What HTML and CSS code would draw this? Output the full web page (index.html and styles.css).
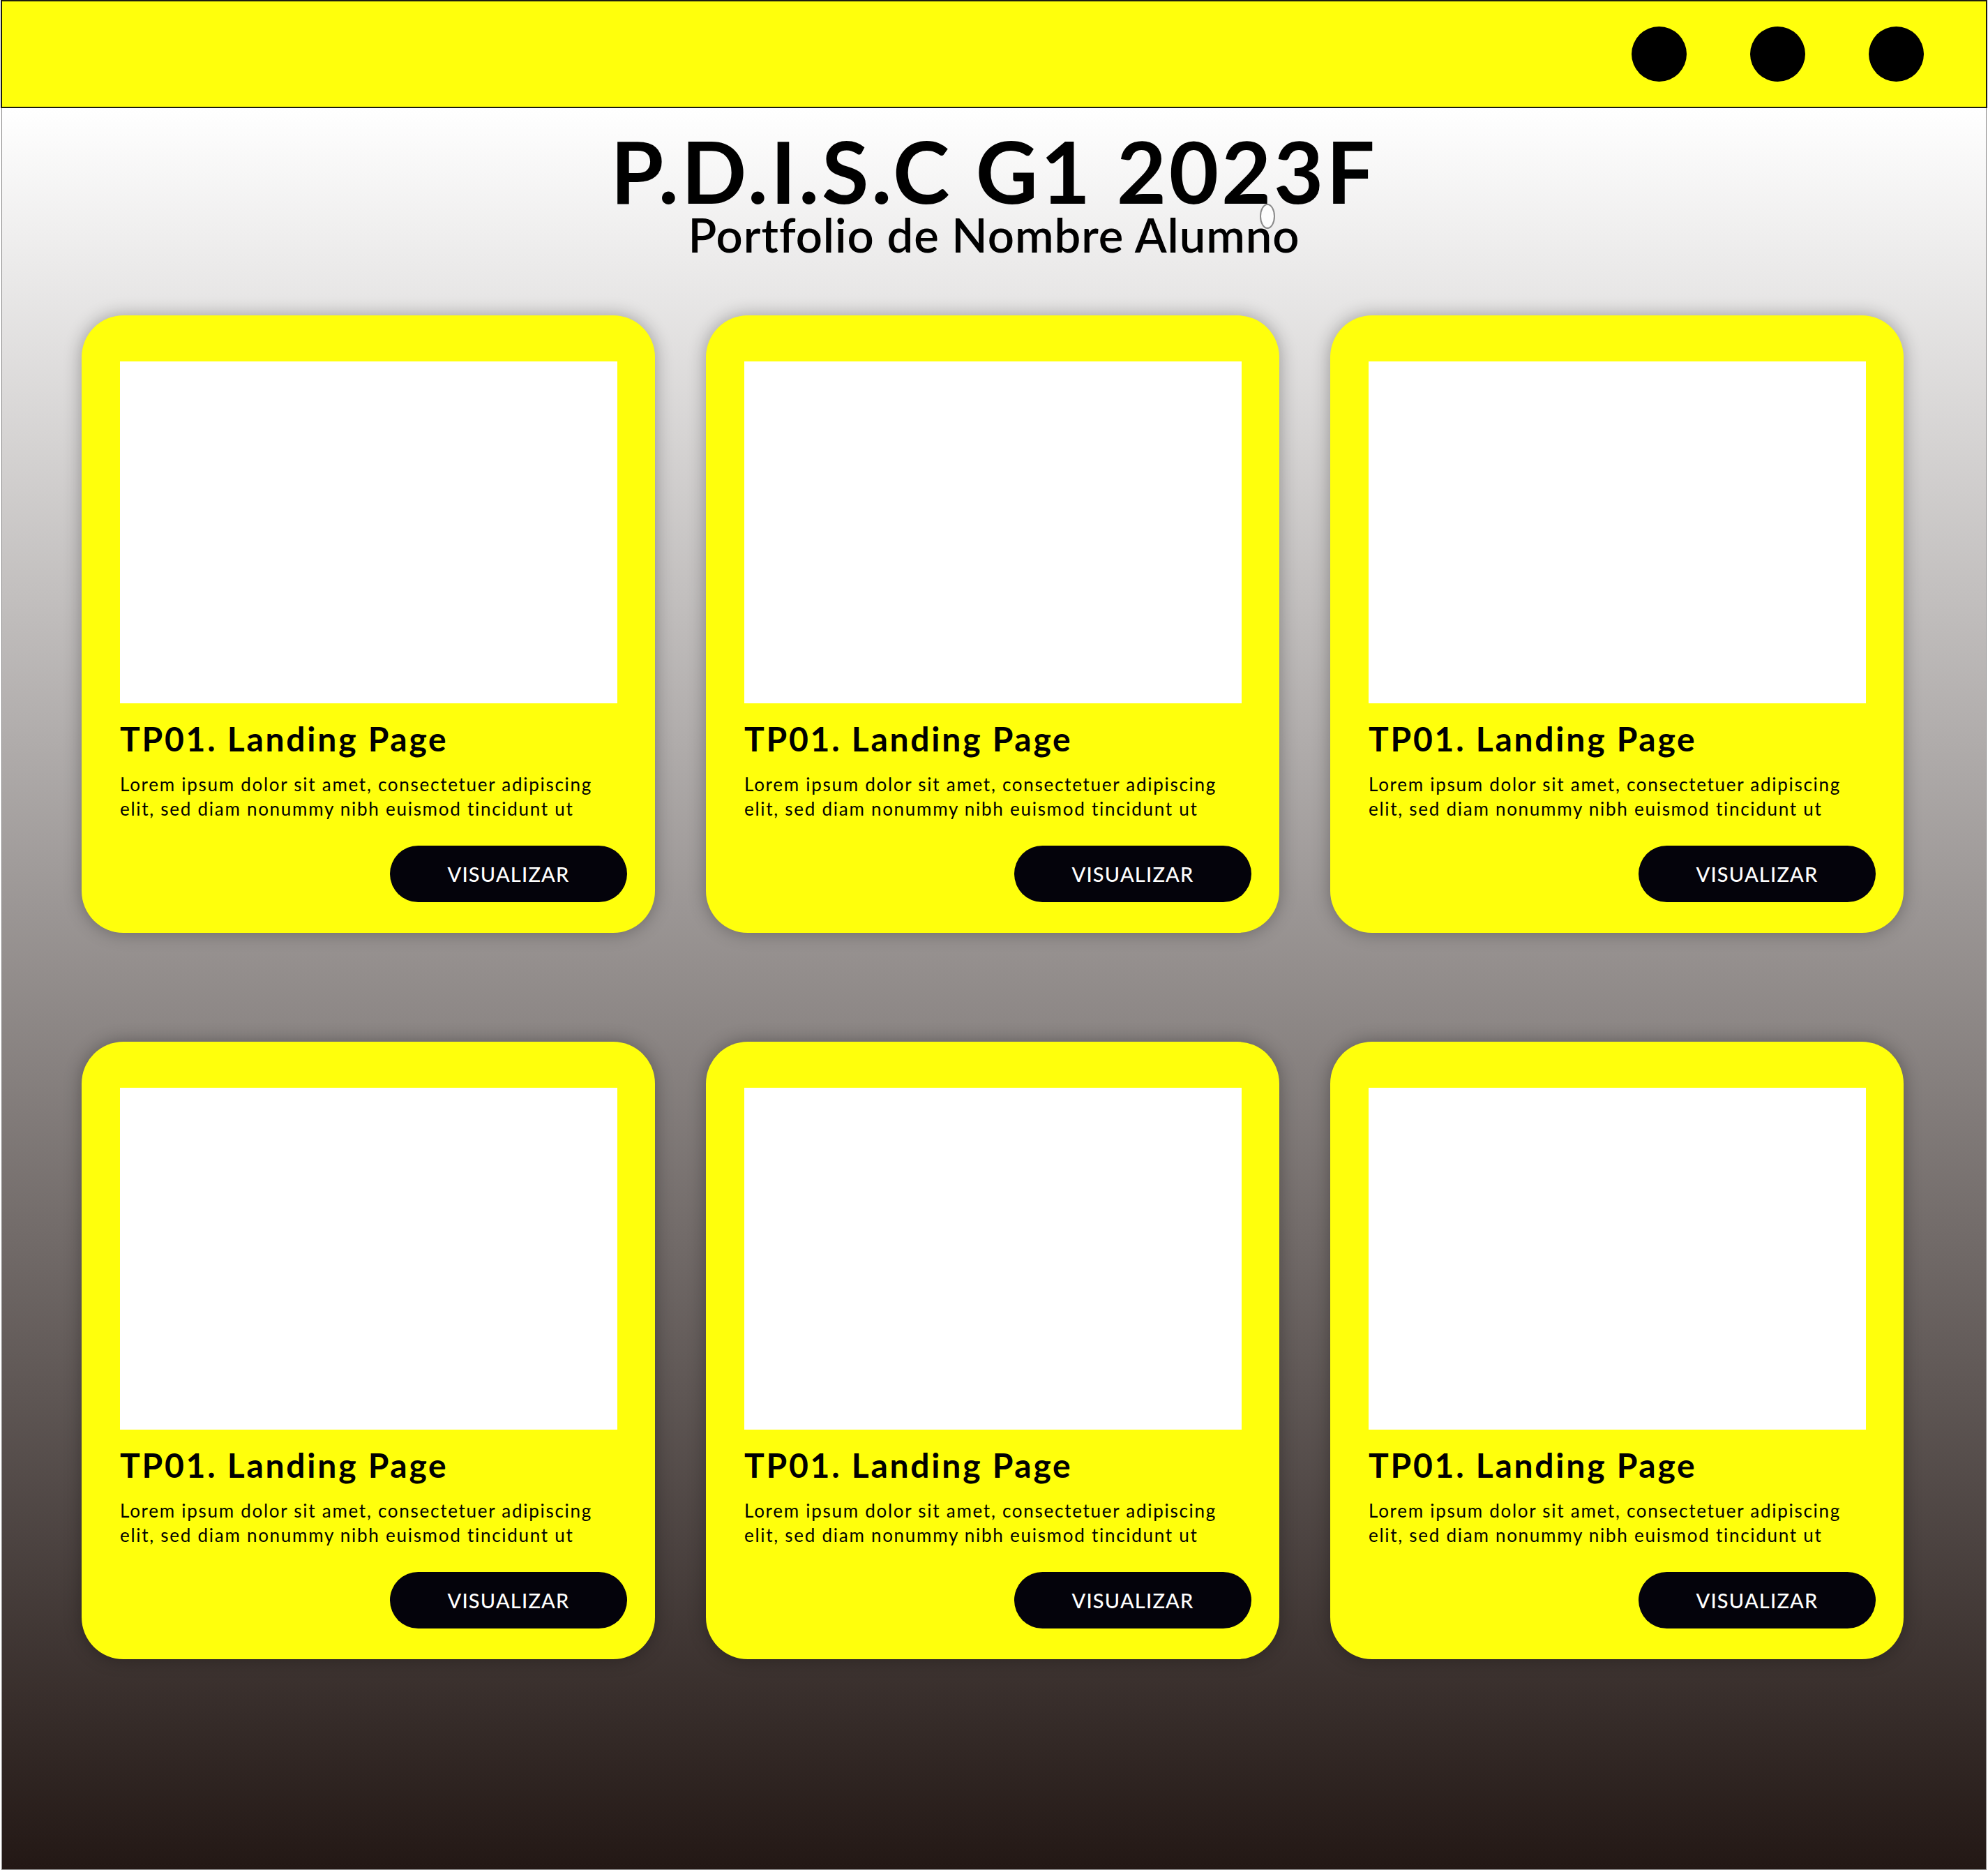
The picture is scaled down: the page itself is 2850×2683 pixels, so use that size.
FILE: index.html
```html
<!DOCTYPE html>
<html lang="es">
<head>
<meta charset="utf-8">
<title>P.D.I.S.C G1 2023F</title>
<link rel="stylesheet" href="styles.css">
</head>
<body>
<div class="window">
  <div class="titlebar">
    <span class="dot"></span>
    <span class="dot"></span>
    <span class="dot"></span>
  </div>
  <main class="content">
    <header class="header">
      <h1 class="title">P.D.I.S.C G1 2023F</h1>
      <p class="subtitle">Portfolio de Nombre Alumno</p>
      <span class="cursor"></span>
    </header>
    <section class="grid">
      <article class="card">
        <div class="thumb"></div>
        <h2 class="card-title">TP01. Landing Page</h2>
        <p class="card-text">Lorem ipsum dolor sit amet, consectetuer adipiscing<br>elit, sed diam nonummy nibh euismod tincidunt ut</p>
        <a class="btn" href="#">VISUALIZAR</a>
      </article>
      <article class="card">
        <div class="thumb"></div>
        <h2 class="card-title">TP01. Landing Page</h2>
        <p class="card-text">Lorem ipsum dolor sit amet, consectetuer adipiscing<br>elit, sed diam nonummy nibh euismod tincidunt ut</p>
        <a class="btn" href="#">VISUALIZAR</a>
      </article>
      <article class="card">
        <div class="thumb"></div>
        <h2 class="card-title">TP01. Landing Page</h2>
        <p class="card-text">Lorem ipsum dolor sit amet, consectetuer adipiscing<br>elit, sed diam nonummy nibh euismod tincidunt ut</p>
        <a class="btn" href="#">VISUALIZAR</a>
      </article>
      <article class="card">
        <div class="thumb"></div>
        <h2 class="card-title">TP01. Landing Page</h2>
        <p class="card-text">Lorem ipsum dolor sit amet, consectetuer adipiscing<br>elit, sed diam nonummy nibh euismod tincidunt ut</p>
        <a class="btn" href="#">VISUALIZAR</a>
      </article>
      <article class="card">
        <div class="thumb"></div>
        <h2 class="card-title">TP01. Landing Page</h2>
        <p class="card-text">Lorem ipsum dolor sit amet, consectetuer adipiscing<br>elit, sed diam nonummy nibh euismod tincidunt ut</p>
        <a class="btn" href="#">VISUALIZAR</a>
      </article>
      <article class="card">
        <div class="thumb"></div>
        <h2 class="card-title">TP01. Landing Page</h2>
        <p class="card-text">Lorem ipsum dolor sit amet, consectetuer adipiscing<br>elit, sed diam nonummy nibh euismod tincidunt ut</p>
        <a class="btn" href="#">VISUALIZAR</a>
      </article>
    </section>
  </main>
</div>
</body>
</html>
```

FILE: styles.css
```css
* {
  box-sizing: border-box;
}

html, body {
  margin: 0;
  padding: 0;
  background: #ffffff;
}

body {
  font-family: Lato, "Open Sans", "Liberation Sans", sans-serif;
  color: #050505;
}

.window {
  width: 2848px;
  margin-left: 1px;
}

.titlebar {
  height: 155px;
  background: #ffff0c;
  border: 2px solid #1c1c10;
  display: flex;
  align-items: center;
  justify-content: flex-end;
  gap: 91px;
  padding-right: 89px;
}

.dot {
  width: 79px;
  height: 79px;
  border-radius: 50%;
  background: #000000;
}

.content {
  height: 2525px;
  margin: 0 1px;
  border: 1px solid #8c8a8a;
  border-top: none;
  background: linear-gradient(180deg, #ffffff 0%, #231815 100%);
  display: flex;
  flex-direction: column;
}

.header {
  position: relative;
  padding-top: 35px;
  text-align: center;
}

.title {
  margin: 0;
  font-size: 123px;
  line-height: 110px;
  font-weight: 700;
  letter-spacing: 3.8px;
  color: #000;
}

.subtitle {
  margin: 2px 0 0;
  font-size: 67px;
  line-height: 68px;
  font-weight: 600;
  letter-spacing: 0.95px;
  color: #000;
}

.cursor {
  position: absolute;
  left: 1803px;
  top: 137px;
  width: 22px;
  height: 36px;
  border: 2px solid #8a8a8a;
  border-radius: 50%;
  background: rgba(255, 255, 255, 0.85);
}

.grid {
  margin-top: 82px;
  padding-left: 114px;
  display: grid;
  grid-template-columns: repeat(3, 822px);
  column-gap: 73px;
  row-gap: 156px;
}

.card {
  height: 885px;
  background: #ffff0c;
  border-radius: 60px;
  padding: 66px 54px 0 55px;
  display: flex;
  flex-direction: column;
  box-shadow: 0 0 26px rgba(0, 0, 0, 0.32);
}

.thumb {
  height: 490px;
  background: #ffffff;
}

.card-title {
  margin: 23px 0 0;
  font-size: 48px;
  line-height: 56px;
  font-weight: 700;
  letter-spacing: 2.75px;
  color: #000;
}

.card-text {
  margin: 20px 0 0;
  font-size: 26px;
  line-height: 35px;
  font-weight: 400;
  letter-spacing: 1.73px;
  color: #000;
  white-space: nowrap;
}

.btn {
  align-self: flex-end;
  margin: 35px -14px 0 0;
  width: 340px;
  height: 81px;
  border-radius: 41px;
  background: #04030b;
  color: #ffffff;
  text-decoration: none;
  font-size: 29px;
  font-weight: 500;
  letter-spacing: 1.2px;
  display: flex;
  align-items: center;
  justify-content: center;
}
```
